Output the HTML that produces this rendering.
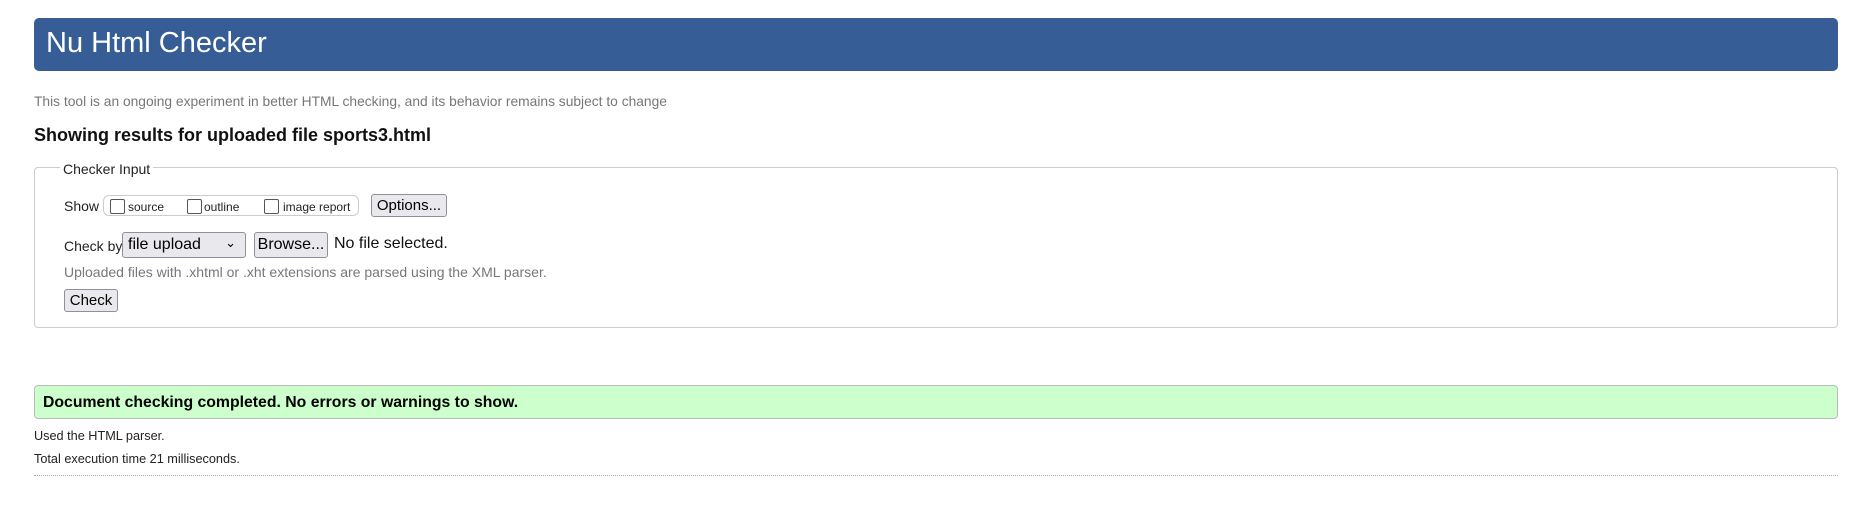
<!DOCTYPE html>
<html><head><meta charset="utf-8"><style>
body{margin:0;background:#fff;font-family:"Liberation Sans",Arial,sans-serif;width:1863px;height:521px;position:relative;overflow:hidden}
.a{position:absolute;white-space:nowrap}
.hdr{left:34px;top:18px;width:1804px;height:53px;background:#365d95;border-radius:5px}
.hdr span{position:absolute;left:12px;top:9px;font-size:29px;color:#fff}
.btn{position:absolute;background:#e9e9ed;border:1px solid #8f8f9d;border-radius:3px;font-size:15px;color:#000;box-sizing:border-box;text-align:center;white-space:nowrap}
.cb{position:absolute;width:13px;height:13px;border:1px solid #555;border-radius:2px;background:#fff;top:3px}
</style></head><body>
<div class="a hdr"><span>Nu Html Checker</span></div>
<div class="a" style="left:34px;top:94px;font-size:13.8px;color:#777">This tool is an ongoing experiment in better HTML checking, and its behavior remains subject to change</div>
<div class="a" style="left:34px;top:125px;font-size:18px;font-weight:bold;color:#111">Showing results for uploaded file sports3.html</div>
<div class="a" style="left:34px;top:167px;width:1804px;height:161px;border:1px solid #ccc;border-radius:4px;box-sizing:border-box"></div>
<div class="a" style="left:60px;top:161px;font-size:14px;color:#222;background:#fff;padding:0 3px">Checker Input</div>
<div class="a" style="left:64px;top:198px;font-size:14px;color:#222">Show</div>
<div class="a" style="left:103px;top:195px;width:256px;height:21px;border:1px solid #ccc;border-radius:6px;box-sizing:border-box;font-size:12px;color:#222">
<span class="cb" style="left:6px"></span><span class="a" style="left:24px;top:4px">source</span>
<span class="cb" style="left:83px"></span><span class="a" style="left:100px;top:4px">outline</span>
<span class="cb" style="left:160px"></span><span class="a" style="left:179px;top:4px">image report</span></div>
<div class="btn" style="left:371px;top:194px;width:76px;height:23px;line-height:21px">Options...</div>
<div class="a" style="left:64px;top:238px;font-size:14px;color:#222">Check by</div>
<div class="btn" style="left:122px;top:232px;width:124px;height:26px;line-height:24px;text-align:left;padding-left:5px;font-size:16px">file upload<span style="position:absolute;right:9px;top:-2px;font-size:13px">&#8964;</span></div>
<div class="btn" style="left:254px;top:232px;width:74px;height:26px;line-height:24px;font-size:16px">Browse...</div>
<div class="a" style="left:334px;top:235px;font-size:16px;color:#111">No file selected.</div>
<div class="a" style="left:64px;top:264px;font-size:14px;color:#777">Uploaded files with .xhtml or .xht extensions are parsed using the XML parser.</div>
<div class="btn" style="left:64px;top:289px;width:54px;height:23px;line-height:21px">Check</div>
<div class="a" style="left:34px;top:385px;width:1804px;height:34px;background:#ccffcc;border:1px solid #bbb;border-radius:4px;box-sizing:border-box"></div>
<div class="a" style="left:43px;top:394px;font-size:15.8px;font-weight:bold;color:#000">Document checking completed. No errors or warnings to show.</div>
<div class="a" style="left:34px;top:429px;font-size:12.7px;color:#222">Used the HTML parser.</div>
<div class="a" style="left:34px;top:452px;font-size:12.7px;color:#222">Total execution time 21 milliseconds.</div>
<div class="a" style="left:34px;top:475px;width:1804px;border-top:1px dotted #aaa"></div>
</body></html>
